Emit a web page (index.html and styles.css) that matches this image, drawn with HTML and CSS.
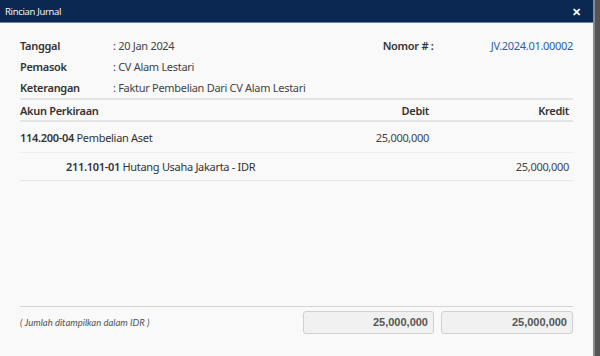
FILE: index.html
```html
<!DOCTYPE html>
<html>
<head>
<meta charset="utf-8">
<link rel="stylesheet" href="styles.css">
</head>
<body>
<div class="screen">
  <div class="modal">
    <div class="modal-header">
      <span class="title">Rincian Jurnal</span>
      <span class="close">&#x2715;</span>
    </div>
    <div class="modal-body">
      <div class="info">
        <div class="info-row">
          <span class="label">Tanggal</span>
          <span class="value">: 20 Jan 2024</span>
          <span class="nomor-label">Nomor # :</span>
          <span class="nomor-value">JV.2024.01.00002</span>
        </div>
        <div class="info-row">
          <span class="label">Pemasok</span>
          <span class="value">: CV Alam Lestari</span>
        </div>
        <div class="info-row">
          <span class="label">Keterangan</span>
          <span class="value">: Faktur Pembelian Dari CV Alam Lestari</span>
        </div>
      </div>
      <div class="table">
        <div class="trow thead">
          <span class="c-akun">Akun Perkiraan</span>
          <span class="c-debit">Debit</span>
          <span class="c-kredit">Kredit</span>
        </div>
        <div class="trow tr1">
          <span class="c-akun"><b>114.200-04</b> Pembelian Aset</span>
          <span class="c-debit">25,000,000</span>
          <span class="c-kredit"></span>
        </div>
        <div class="trow tr2">
          <span class="c-akun indent"><b>211.101-01</b> Hutang Usaha Jakarta - IDR</span>
          <span class="c-debit"></span>
          <span class="c-kredit">25,000,000</span>
        </div>
      </div>
      <div class="footer">
        <span class="note">( Jumlah ditampilkan dalam IDR )</span>
        <span class="total total-debit">25,000,000</span>
        <span class="total total-kredit">25,000,000</span>
      </div>
    </div>
  </div>
  <div class="scroll"></div>
</div>
</body>
</html>
```
FILE: styles.css
```css
html, body {
  margin: 0;
  padding: 0;
}
body {
  width: 600px;
  height: 356px;
  overflow: hidden;
  background: #4a4a4a;
  font-family: "Noto Sans", "Open Sans", sans-serif;
  font-size: 11px;
  letter-spacing: -0.3px;
  color: #333;
}
.screen {
  display: flex;
  height: 356px;
}
.modal {
  width: 593px;
  height: 356px;
  display: flex;
  flex-direction: column;
  background: #f9f9f9;
}
.scroll {
  flex: 1;
  background: linear-gradient(to right, #8a8a8a 0, #8a8a8a 2px, #555 2px);
}
.modal-header {
  height: 22px;
  background: #0b2852;
  border-bottom: 1px solid #6f86a6;
  display: flex;
  align-items: center;
  justify-content: space-between;
  padding: 0 12px 0 5px;
  color: #fff;
}
.title {
  font-family: "Open Sans", "Noto Sans", sans-serif;
  font-size: 9.5px;
  letter-spacing: -0.3px;
}
.close {
  font-size: 11px;
  font-weight: bold;
}
.modal-body {
  flex: 1;
  display: flex;
  flex-direction: column;
  padding: 0 20px;
}
.info {
  padding-top: 12px;
  border-bottom: 2px solid #e4e4e4;
}
.info-row {
  display: flex;
  align-items: center;
  height: 21px;
}
.label {
  width: 93px;
  font-weight: 600;
}
.value {
  flex: 1;
  color: #444;
}
.nomor-label {
  font-weight: 600;
  width: 108px;
}
.nomor-value {
  color: #2d5da8;
  text-align: right;
}
.trow {
  display: flex;
  align-items: center;
}
.thead {
  height: 20px;
  font-weight: 600;
  border-bottom: 2px solid #e4e4e4;
}
.tr1 {
  height: 30px;
  border-bottom: 1px solid #eeeeee;
}
.tr2 {
  height: 27px;
  border-bottom: 1px solid #e6e6e6;
}
.c-akun {
  flex: 1;
}
.c-akun b {
  font-weight: 600;
}
.indent {
  padding-left: 46px;
}
.c-debit {
  width: 120px;
  text-align: right;
}
.c-kredit {
  width: 140px;
  text-align: right;
  padding-right: 4px;
}
.tr1 .c-debit, .tr2 .c-kredit {
  color: #444;
}
.footer {
  margin-top: auto;
  margin-bottom: 22px;
  border-top: 1px solid #d4d4d4;
  padding-top: 4px;
  display: flex;
  align-items: center;
  gap: 7px;
}
.note {
  flex: 1;
  font-family: "Lato", sans-serif;
  font-style: italic;
  font-size: 9.5px;
  letter-spacing: 0;
  color: #555;
}
.total {
  box-sizing: border-box;
  height: 23px;
  border: 1px solid #d0d0d0;
  border-radius: 3px;
  background: #f1f1f1;
  font-family: "Liberation Sans", Arial, sans-serif;
  font-weight: bold;
  font-size: 11px;
  letter-spacing: 0;
  color: #555;
  text-align: right;
  padding-right: 5px;
  line-height: 21px;
}
.total-debit {
  width: 131px;
}
.total-kredit {
  width: 132px;
}
```
